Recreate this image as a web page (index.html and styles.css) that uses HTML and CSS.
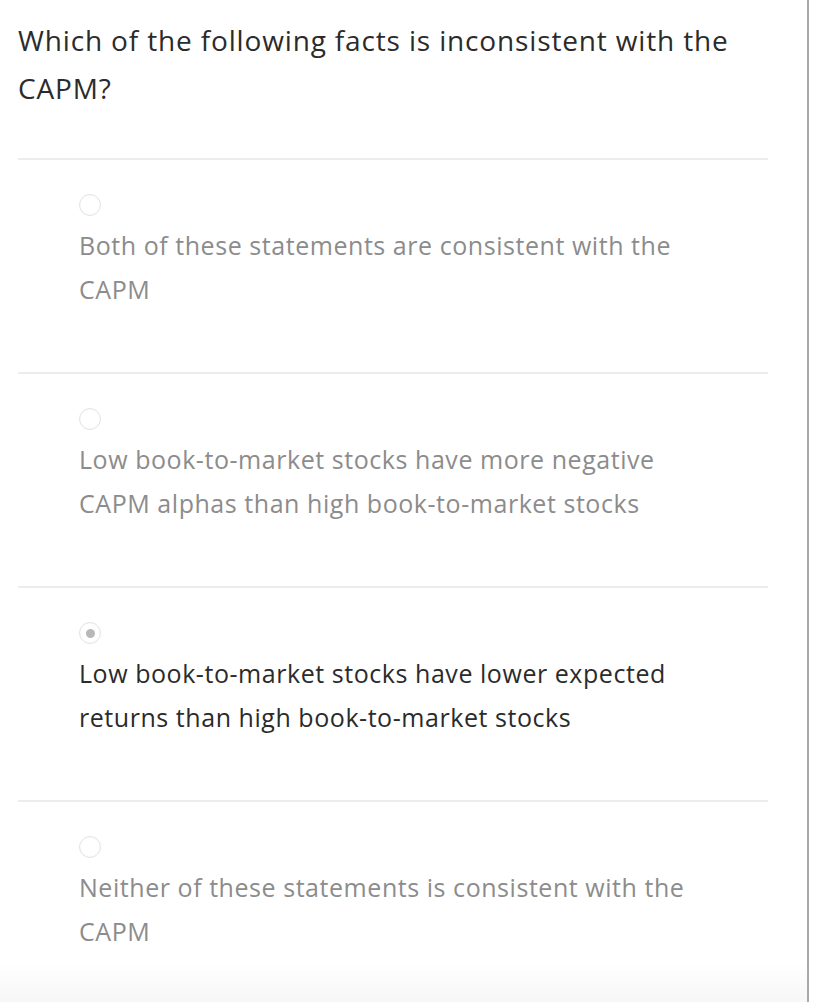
FILE: index.html
```html
<!DOCTYPE html>
<html>
<head>
<meta charset="utf-8">
<link rel="stylesheet" href="styles.css">
</head>
<body>
<div class="page">
  <div class="question">Which of the following facts is inconsistent with the CAPM?</div>
  <div class="options">
    <div class="option">
      <span class="radio"></span>
      <div class="label">Both of these statements are consistent with the CAPM</div>
    </div>
    <div class="option">
      <span class="radio"></span>
      <div class="label">Low book-to-market stocks have more negative CAPM alphas than high book-to-market stocks</div>
    </div>
    <div class="option selected">
      <span class="radio"></span>
      <div class="label">Low book-to-market stocks have lower expected returns than high book-to-market stocks</div>
    </div>
    <div class="option">
      <span class="radio"></span>
      <div class="label">Neither of these statements is consistent with the CAPM</div>
    </div>
  </div>
  <div class="fade"></div>
</div>
</body>
</html>
```
FILE: styles.css
```css
html, body {
  margin: 0;
  padding: 0;
  background: #ffffff;
}
body {
  font-family: "Open Sans", "Noto Sans", sans-serif;
  width: 814px;
  height: 1002px;
  overflow: hidden;
}
.page {
  position: relative;
  width: 807px;
  height: 1002px;
  border-right: 2px solid #a9a9a9;
  box-sizing: content-box;
  display: flex;
  flex-direction: column;
}
.question {
  padding: 16px 0 0 18px;
  width: 740px;
  font-size: 28px;
  letter-spacing: 0.85px;
  line-height: 48px;
  color: #2b2b2b;
}
.options {
  margin: 46px 0 0 18px;
  width: 750px;
  display: flex;
  flex-direction: column;
}
.option {
  border-top: 2px solid #ececec;
  padding: 34px 0 61px 61px;
  height: 117px;
  display: flex;
  flex-direction: column;
  align-items: flex-start;
  gap: 7px;
  box-sizing: content-box;
}
.radio {
  width: 20px;
  height: 20px;
  border-radius: 50%;
  border: 1px solid #e4e4e4;
  box-shadow: inset 0 0 2px rgba(0,0,0,0.06);
  display: flex;
  align-items: center;
  justify-content: center;
  flex: none;
}
.selected .radio::after {
  content: "";
  width: 9px;
  height: 9px;
  border-radius: 50%;
  background: #b8b8b8;
}
.label {
  width: 615px;
  font-size: 25px;
  letter-spacing: 0.55px;
  line-height: 44px;
  color: #8c8c8c;
}
.selected .label {
  color: #2b2b2b;
}
.fade {
  position: absolute;
  left: 0;
  right: 0;
  bottom: 0;
  height: 40px;
  background: linear-gradient(to bottom, rgba(247,247,247,0), #f7f7f7);
}
```
